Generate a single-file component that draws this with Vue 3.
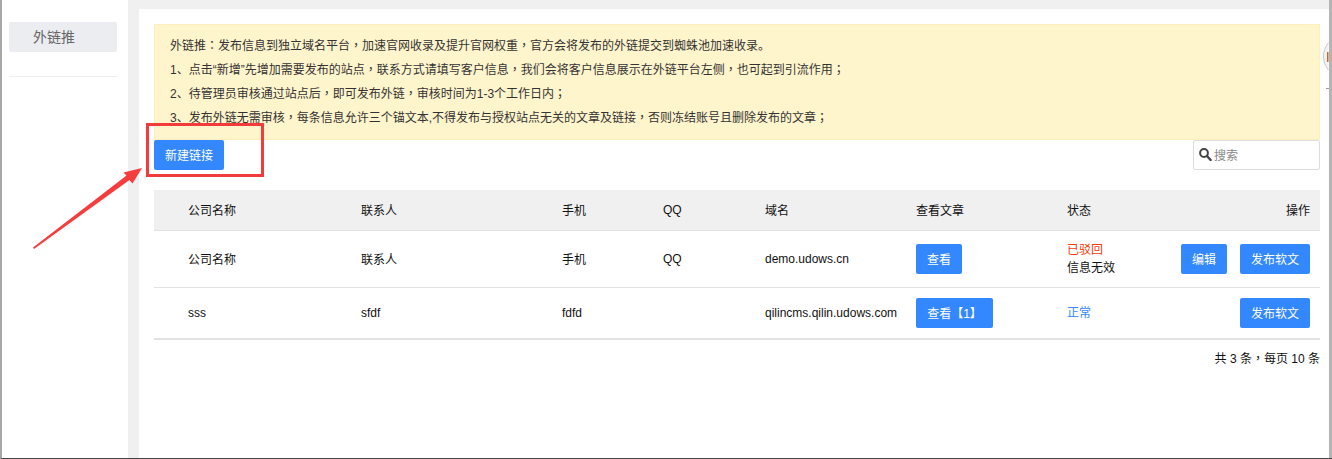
<script setup>
const notes = [
  '外链推：发布信息到独立域名平台，加速官网收录及提升官网权重，官方会将发布的外链提交到蜘蛛池加速收录。',
  '1、点击“新增”先增加需要发布的站点，联系方式请填写客户信息，我们会将客户信息展示在外链平台左侧，也可起到引流作用；',
  '2、待管理员审核通过站点后，即可发布外链，审核时间为1-3个工作日内；',
  '3、发布外链无需审核，每条信息允许三个锚文本,不得发布与授权站点无关的文章及链接，否则冻结账号且删除发布的文章；'
]
const parts = (s) => s.split(/([，：；])/)
const isPunct = (s) => /^[，：；]$/.test(s)
</script>

<template>
  <div class="frame">
    <aside class="side">
      <div class="side-item">外链推</div>
      <div class="side-line"></div>
    </aside>
    <main class="main">
      <div class="card">
        <div class="notice">
          <p v-for="n in notes" :key="n"><template v-for="(s, i) in parts(n)" :key="i"><span v-if="isPunct(s)" class="punct">{{ s }}</span><template v-else>{{ s }}</template></template></p>
        </div>
        <div class="tools">
          <button class="btn">新建链接</button>
          <label class="search">
            <svg width="13" height="13" viewBox="0 0 13 13">
              <circle cx="5" cy="5" r="3.9" fill="none" stroke="#444" stroke-width="2" />
              <path d="M8 8 L11.6 12" stroke="#444" stroke-width="2.4" stroke-linecap="round" />
            </svg>
            <span>搜索</span>
          </label>
        </div>
        <table class="tbl">
          <colgroup>
            <col class="c1" /><col class="c2" /><col class="c3" /><col class="c4" />
            <col class="c5" /><col class="c6" /><col />
          </colgroup>
          <thead>
            <tr>
              <th class="first">公司名称</th><th>联系人</th><th>手机</th><th>QQ</th><th>域名</th><th>查看文章</th><th class="end">状态<span class="op">操作</span></th>
            </tr>
          </thead>
          <tbody>
            <tr class="r1">
              <td class="first">公司名称</td><td>联系人</td><td>手机</td><td>QQ</td><td>demo.udows.cn</td>
              <td><button class="btn view">查看</button></td>
              <td class="end">
                <div class="status-cell">
                  <div class="status"><span class="red">已驳回</span><br />信息无效</div>
                  <div class="acts"><button class="btn view">编辑</button><button class="btn">发布软文</button></div>
                </div>
              </td>
            </tr>
            <tr class="r2">
              <td class="first">sss</td><td>sfdf</td><td>fdfd</td><td></td><td class="nowrap">qilincms.qilin.udows.com</td>
              <td><button class="btn wide">查看【1】</button></td>
              <td class="end">
                <div class="status-cell">
                  <div class="status"><span class="blue">正常</span></div>
                  <div class="acts"><button class="btn">发布软文</button></div>
                </div>
              </td>
            </tr>
          </tbody>
        </table>
        <div class="pager">共 3 条<span class="punct">，</span>每页 10 条</div>
      </div>
    </main>
    <div class="mark-box"></div>
    <svg class="mark-arrow" width="120" height="90" viewBox="0 0 120 90">
      <path d="M2 80.5 L95.5 8.5 L92.5 5.5 L111 1 L101.5 16.5 L98.5 13 L3 82 Z" fill="#f63d3d" />
    </svg>
    <div class="edge-bit"></div>
    <svg class="edge-arc" width="6" height="50" viewBox="0 0 6 50">
      <path d="M5.5 0.5 C2 5 0.5 10 0.5 14 C0.5 19 2 24 5.5 28" fill="#f4f4f4" stroke="#c8c8c8" />
      <rect x="4" y="10" width="1.5" height="10" fill="#d9661f" />
      <rect x="3" y="46" width="3" height="1" fill="#999" />
    </svg>
  </div>
</template>

<style>
html, body { margin: 0; padding: 0; background: #fff; }
</style>

<style scoped>
* { box-sizing: border-box; }
.frame {
  position: relative;
  width: 1332px;
  height: 459px;
  display: flex;
  overflow: hidden;
  border-left: 2px solid #a8a8a8;
  border-bottom: 1px solid #444;
  font-family: "Liberation Sans", "Noto Sans CJK SC", sans-serif;
  font-size: 12px;
  color: #111;
}
.punct { font-family: "Noto Sans CJK TC", sans-serif; }
.side {
  width: 127px;
  flex: none;
  padding: 22px 11px 0 7px;
  border-right: 1px solid #eee;
  background: #fff;
}
.side-item {
  height: 30px;
  line-height: 30px;
  padding-left: 24px;
  background: #ecedf1;
  border-radius: 2px;
  font-size: 14px;
  color: #666;
}
.side-line { height: 1px; margin-top: 24px; background: #eee; }
.main {
  flex: 1;
  padding: 9px 3px 0 10px;
  background: #f0f0f0;
}
.card {
  height: 100%;
  padding: 15px 9px 0 15px;
  background: #fff;
}
.notice {
  height: 116px;
  padding: 8px 15px 0;
  background: #fff5cc;
  border: 1px solid #fdeebb;
  color: #333;
}
.notice p { margin: 0; height: 24px; line-height: 24px; white-space: nowrap; }
.tools { display: flex; justify-content: space-between; height: 50px; }
.btn {
  height: 30px;
  width: 70px;
  padding: 0 0 1px;
  border: 0;
  border-radius: 2px;
  background: #3388ff;
  color: #fff;
  font: inherit;
  text-align: center;
}
.search {
  width: 127px;
  height: 30px;
  display: flex;
  align-items: center;
  gap: 2px;
  padding: 0 0 1px 5px;
  border: 1px solid #ddd;
  border-radius: 2px;
  color: #888;
}
.tbl { width: 1166px; table-layout: fixed; border-collapse: collapse; }
.c1 { width: 197px; }
.c2 { width: 201px; }
.c3 { width: 101px; }
.c4 { width: 102px; }
.c5 { width: 151px; }
.c6 { width: 151px; }
.tbl th, .tbl td { padding: 0 0 0 10px; text-align: left; font-weight: 400; vertical-align: middle; }
.tbl th { height: 40px; background: #f0f0f0; border-bottom: 1px solid #e2e2e2; }
.tbl .first { padding-left: 34px; }
.tbl .end { padding-right: 10px; }
.op { float: right; }
.r1 td { height: 57px; border-bottom: 1px solid #e2e2e2; }
.r2 td { height: 52px; border-bottom: 2px solid #e2e2e2; }
.nowrap { white-space: nowrap; }
.tbl td .btn { display: block; }
.tbl td .btn.view { width: 46px; }
.tbl td .btn.wide { width: 77px; }
.status-cell { display: flex; justify-content: space-between; align-items: center; }
.status { line-height: 18px; }
.acts { display: flex; gap: 13px; }
.red { color: #f43b0b; }
.blue { color: #3388ff; }
.pager { margin-top: 9px; text-align: right; line-height: 18px; }
.mark-box {
  position: absolute;
  left: 144px;
  top: 123px;
  width: 118px;
  height: 54px;
  border: 3px solid #f33b3b;
}
.mark-arrow { position: absolute; left: 29px; top: 167px; }
.edge-bit {
  position: absolute;
  right: -2px;
  top: 0;
  bottom: 0;
  width: 5px;
  background: #b4b4b4;
}
.edge-arc { position: absolute; right: 3px; top: 42px; }
</style>
